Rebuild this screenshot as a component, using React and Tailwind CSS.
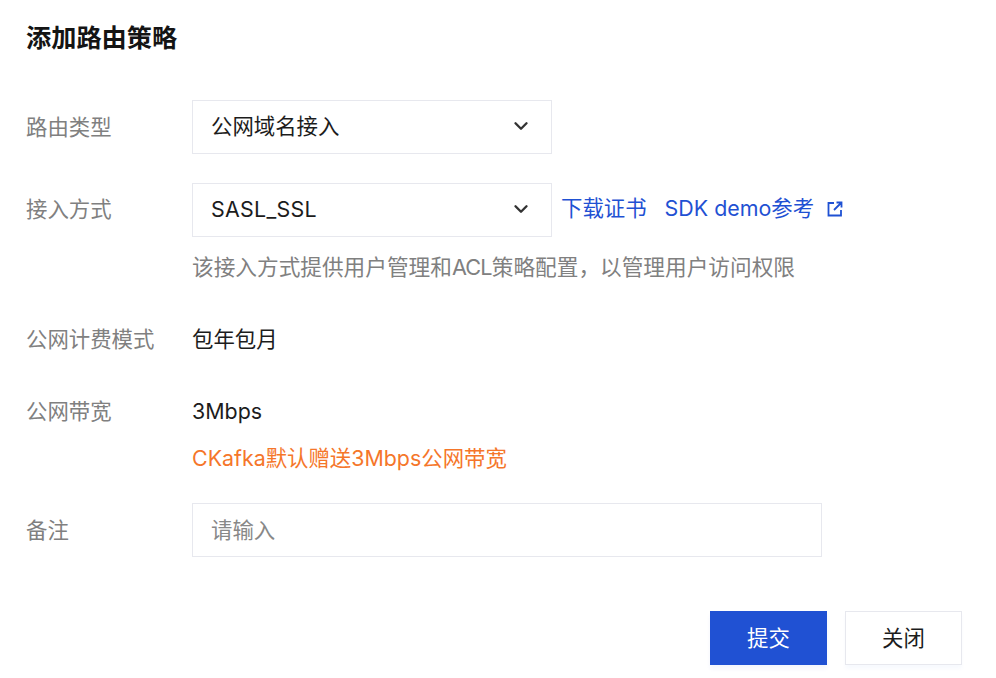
import React from 'react';
import { ChevronDown } from 'lucide-react';

const FONT = "font-['Inter','Noto_Sans_CJK_SC',sans-serif]";

const Row = ({ label, className, labelClass = '', children }) => (
  <div className={`flex ${className}`}>
    <div className={`w-[166px] shrink-0 h-[54px] flex items-center text-[21.4px] text-[#808080] ${labelClass}`}>{label}</div>
    <div className="min-w-0">{children}</div>
  </div>
);

const Select = ({ value, className = '' }) => (
  <div className="w-[360px] h-[54px] border border-[#e7e8ee] bg-white pl-[18px] pr-[19px] flex items-center justify-between text-[21.4px] text-[#1c1c1c]">
    <span className={`-mt-[2px] ${className}`}>{value}</span>
    <ChevronDown size={22} strokeWidth={2.6} className="text-[#333] -mt-[3px]" />
  </div>
);

export default function App() {
  return (
    <div className={`w-[996px] h-[678px] bg-white pl-[26px] pr-[34px] pt-[22px] overflow-hidden ${FONT}`}>
      <h2 className="text-[25.2px] leading-[32px] font-semibold text-[#141414]">添加路由策略</h2>
      <Row label="路由类型" className="mt-[46px]">
        <Select value="公网域名接入" />
      </Row>
      <Row label="接入方式" className="mt-[29px]" labelClass="-mt-[1px]">
        <div className="flex items-center">
          <Select value="SASL_SSL" className="tracking-[0.3px]" />
          <a className="ml-[9px] text-[21.4px] text-[#1f51d3] -mt-[3px]">下载证书</a>
          <a className="ml-[18px] text-[21.4px] text-[#1f51d3] -mt-[3px]">SDK demo参考</a>
          <svg className="ml-[12px] -mt-[3px]" width="18" height="18" viewBox="0 0 18 18" fill="none" stroke="#1f51d3" strokeWidth="1.8">
            <path d="M8 3H2.5V15.5H15V10" />
            <path d="M10.5 2.5H15.5V7.5M15.5 2.5L8 10" />
          </svg>
        </div>
        <p className="mt-[14px] text-[21.67px] leading-[32px] text-[#808080]">
          该接入方式提供用户管理和<span className="tracking-[-0.8px]">ACL</span>策略配置，以管理用户访问权限
        </p>
      </Row>
      <Row label="公网计费模式" className="mt-[29px]">
        <div className="h-[54px] flex items-center text-[21.4px] text-[#1c1c1c]">包年包月</div>
      </Row>
      <Row label="公网带宽" className="mt-[18px]">
        <div className="h-[54px] flex items-center text-[21.4px] text-[#1c1c1c]">3Mbps</div>
        <p className="mt-[4px] text-[21.4px] leading-[32px] text-[#f5762a]">CKafka默认赠送3Mbps公网带宽</p>
      </Row>
      <Row label="备注" className="mt-[29px]">
        <div className="w-[630px] h-[54px] border border-[#e7e8ee] pl-[18px] flex items-center text-[21.4px] text-[#888]">请输入</div>
      </Row>
      <div className="flex justify-end gap-[18px] mt-[54px]">
        <button className="w-[117px] h-[54px] bg-[#2051d3] text-white text-[21.4px] shadow-[0_4px_4px_rgba(32,81,211,0.05)]">提交</button>
        <button className="w-[117px] h-[54px] bg-white border border-[#e7e8ee] text-[#1c1c1c] text-[21.4px] shadow-[0_4px_4px_rgba(32,81,211,0.03)]">关闭</button>
      </div>
    </div>
  );
}
